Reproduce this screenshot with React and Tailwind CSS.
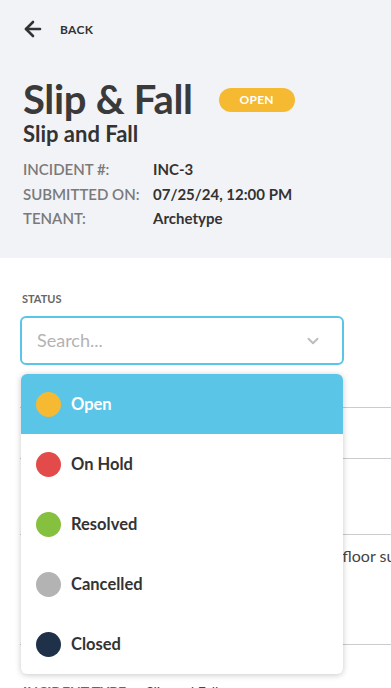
import React from "react";
import { ArrowLeft, ChevronDown } from "lucide-react";

const options = [
  { label: "Open", color: "bg-[#f6b932]", active: true },
  { label: "On Hold", color: "bg-[#e34b4b]" },
  { label: "Resolved", color: "bg-[#86c03f]" },
  { label: "Cancelled", color: "bg-[#b3b3b3]" },
  { label: "Closed", color: "bg-[#1f3049]" },
];

export default function App() {
  return (
    <div className="w-full min-h-[688px] overflow-hidden bg-white text-[#333] font-['Lato','Noto_Sans',sans-serif]">
      <header className="h-[258px] bg-[#f2f3f7] pl-[23px] pt-[19px]">
        <div className="flex items-center h-[20px]">
          <ArrowLeft size={24} strokeWidth={2.6} className="text-[#333] -ml-[2px]" />
          <span className="ml-[15px] mt-[2px] text-[12px] font-bold tracking-[0.3px] text-[#333]">BACK</span>
        </div>
        <div className="mt-[38px] flex items-center h-[44px]">
          <h1 className="text-[40px] font-bold leading-[44px] text-[#3a3a3a] tracking-[-0.3px]">Slip &amp; Fall</h1>
          <span className="ml-[26px] mt-[2px] h-[24px] w-[76px] rounded-full bg-[#f6b932] flex items-center justify-center text-[12px] font-bold text-white tracking-[0.3px]">OPEN</span>
        </div>
        <div className="mt-0 text-[22px] font-bold leading-[26px] text-[#333]">Slip and Fall</div>
        <div className="mt-[12px] grid grid-cols-[130px_1fr] gap-y-[4px] text-[15px] leading-[20.5px]">
          <span className="font-semibold text-[#7a7a7a]">INCIDENT #:</span>
          <span className="font-bold text-[#333]">INC-3</span>
          <span className="font-semibold text-[#7a7a7a] whitespace-nowrap">SUBMITTED ON:</span>
          <span className="font-bold text-[#333]">07/25/24, 12:00 PM</span>
          <span className="font-semibold text-[#7a7a7a]">TENANT:</span>
          <span className="font-bold text-[#333]">Archetype</span>
        </div>
      </header>

      <main className="pl-[20px] pt-[34px]">
        <div className="pl-[2px] text-[11px] font-bold text-[#666] leading-[14px]">STATUS</div>
        <div className="mt-[10px] w-[324px] h-[49px] rounded-[6px] border-2 border-[#5bc5e8] bg-white flex items-center pl-[15px] pr-[20px]">
          <span className="flex-1 text-[18px] text-[#b3b3b3]">Search...</span>
          <ChevronDown size={18} strokeWidth={2.6} className="text-[#bdbdbd]" />
        </div>

        <div className="relative">
          <div className="h-[43px] border-b border-[#cccccc]" />
          <div className="h-[51px] border-b border-[#cccccc]" />
          <div className="h-[76px] border-b border-[#cccccc]" />
          <div className="pt-[9px] h-[110px] border-b border-[#cccccc]">
            <p className="whitespace-nowrap text-[16px] text-[#444] pl-[7px]">A customer slipped and fell on the wet lobby floor surface.</p>
          </div>
          <div className="pt-[37px] flex gap-[20px] text-[14px] leading-[20px] pl-[3px]">
            <span className="font-bold text-[#666]">INCIDENT TYPE</span>
            <span className="text-[#444]">Slip and Fall</span>
          </div>

          <div className="absolute left-[1px] top-[9px] w-[322px] rounded-[6px] bg-white shadow-[0_1px_6px_rgba(0,0,0,0.22)] overflow-hidden">
            {options.map((o) => (
              <div
                key={o.label}
                className={`h-[60px] flex items-center pl-[15px] ${o.active ? "bg-[#5bc5e8] text-white" : "text-[#333]"}`}
              >
                <span className={`w-[25px] h-[25px] rounded-full ${o.color}`} />
                <span className="ml-[10px] text-[16.5px] font-bold">{o.label}</span>
              </div>
            ))}
          </div>
        </div>
      </main>
    </div>
  );
}
